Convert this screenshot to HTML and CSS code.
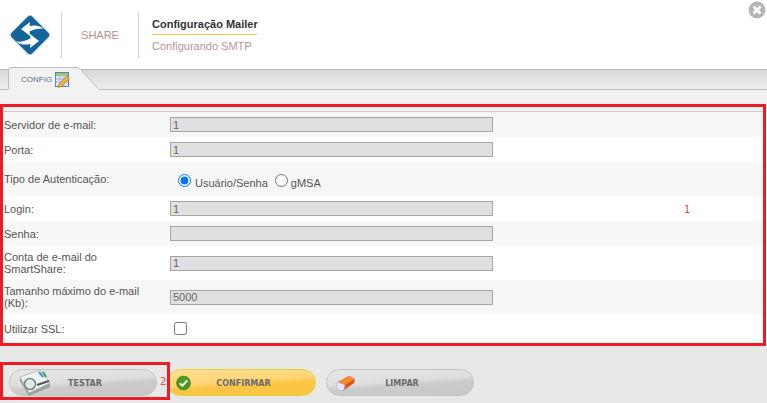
FILE: index.html
```html
<!DOCTYPE html>
<html>

  <head>
    <meta charset="UTF-8">
    <title>Configuração Mailer</title>
    <link rel="stylesheet" href="styles.css">
  </head>

  <body>
    <div class="header">
      <svg class="logo" width="44" height="44" viewBox="0 0 44 44">
        <rect x="7" y="7" width="30" height="30" rx="4" transform="rotate(45 22 22)" fill="#14649c" stroke="#d5d8da" stroke-width="1"/>
        <path d="M13 16 L22 9 L21.5 13 C26 12 31 12 36 15.5 C31 15 26 16 21.5 18.5 L22 23 Z" fill="#fff"/>
        <path d="M31 28 L22 35 L22.5 31 C18 32 13 32 8 28.5 C13 29 18 28 22.5 25.5 L22 21 Z" fill="#fff"/>
      </svg>
      <div class="sep"></div>
      <div class="brand">SHARE</div>
      <div class="sep"></div>
      <div class="titles">
        <div class="title">Configuração Mailer</div>
        <div class="subtitle">Configurando SMTP</div>
      </div>
      <svg class="close" width="18" height="18" viewBox="0 0 18 18">
        <circle cx="9" cy="9" r="8.5" fill="#b5b5b5"/>
        <path d="M5.5 5.5 L12.5 12.5 M12.5 5.5 L5.5 12.5" stroke="#fff" stroke-width="2.6"/>
      </svg>
    </div>

    <div class="tabbar">
      <div class="tab">
        <svg class="tabShape" width="92" height="23" viewBox="0 0 92 23">
          <path d="M0.5 23 L0.5 3 Q0.5 0.5 3 0.5 L69 0.5 Q71 0.5 72 2 L91 22.5 L91 23 Z" fill="#f2f2f2"/>
          <path d="M0.5 22 L0.5 3 Q0.5 0.5 3 0.5 L69 0.5 Q71 0.5 72 2 L91 22.5" fill="none" stroke="#bdbdbd"/>
        </svg>
        <span class="tabLabel">CONFIG</span>
        <svg class="tabIcon" width="15" height="17" viewBox="0 0 15 17">
          <rect x="0.5" y="1.5" width="13" height="14" fill="#dfe9f5" stroke="#5c84b8"/>
          <rect x="1" y="2" width="12" height="3" fill="#9cc67c"/>
          <path d="M1 8 H13 M1 11 H13 M5 5 V15 M9 5 V15" stroke="#9db6d6" stroke-width="1"/>
          <path d="M3 16.5 L4 13 L12 5 L14.5 7.5 L6.5 15.5 Z" fill="#f0b040" stroke="#9a6a20" stroke-width="0.6"/>
        </svg>
      </div>
    </div>

    <div class="content">
      <div class="rows">
        <div class="row">
          <label class="lbl">Servidor de e-mail:</label>
          <input class="txt" type="text" value="1" readonly>
        </div>
        <div class="row">
          <label class="lbl">Porta:</label>
          <input class="txt" type="text" value="1" readonly>
        </div>
        <div class="row tall">
          <label class="lbl">Tipo de Autenticação:</label>
          <div class="radios">
            <input class="radio first" type="radio" name="auth" checked><span class="radioText">Usuário/Senha</span>
            <input class="radio" type="radio" name="auth"><span class="radioText">gMSA</span>
          </div>
        </div>
        <div class="row">
          <label class="lbl">Login:</label>
          <input class="txt" type="text" value="1" readonly>
        </div>
        <div class="row">
          <label class="lbl">Senha:</label>
          <input class="txt" type="text" value="" readonly>
        </div>
        <div class="row tall">
          <label class="lbl">Conta de e-mail do SmartShare:</label>
          <input class="txt" type="text" value="1" readonly>
        </div>
        <div class="row tall">
          <label class="lbl">Tamanho máximo do e-mail (Kb):</label>
          <input class="txt" type="text" value="5000" readonly>
        </div>
        <div class="row last">
          <label class="lbl">Utilizar SSL:</label>
          <input class="check" type="checkbox">
        </div>
      </div>
    </div>

    <div class="footer">
      <button type="button" class="btn">
        <svg class="btnIcon" width="34" height="28" viewBox="0 0 34 28">
          <path d="M1 8 L1 12 L10 27 L31 18 L31 14 L10 24 Z" fill="#9aa1a1"/>
          <path d="M1 8 L21 1 L31 14 L10 24 Z" fill="#eef1f1" stroke="#a4abab" stroke-width="0.7"/>
          <path d="M20 3 L24 8" stroke="#3d7fc8" stroke-width="2"/>
          <path d="M24 3 L27 8" stroke="#2fa84a" stroke-width="2"/>
          <path d="M18 16 L30 12" stroke="#50585a" stroke-width="2"/>
          <circle cx="11" cy="15" r="5.5" fill="#dfe8ea" stroke="#7d8788" stroke-width="1.6"/>
        </svg>
        <span class="btnText">TESTAR</span>
      </button>
      <button type="button" class="btn ok">
        <svg class="btnIcon" width="15" height="15" viewBox="0 0 15 15">
          <circle cx="7.5" cy="7.5" r="7" fill="#4a9a1c" stroke="#3a7d14" stroke-width="0.6"/>
          <path d="M3.8 7.8 L6.4 10.4 L11.2 4.8" fill="none" stroke="#fff" stroke-width="2"/>
        </svg>
        <span class="btnText">CONFIRMAR</span>
      </button>
      <button type="button" class="btn">
        <svg class="btnIcon" width="20" height="16" viewBox="0 0 20 16">
          <path d="M3 7 L14 1 L20 4 L19 8 L9 15 L5 16 Z" fill="#e2500f"/>
          <path d="M3 7 L14 1 L20 4 L10 10 Z" fill="#f78a2e"/>
          <path d="M3 7 L10 10 L9 15 L5 16 Q-1 12 3 7 Z" fill="#e6e8fa" stroke="#9aa0c8" stroke-width="0.5"/>
        </svg>
        <span class="btnText">LIMPAR</span>
      </button>
    </div>

    <div class="mark markForm"></div>
    <div class="mark markTest"></div>
    <span class="num numForm">1</span>
    <span class="num numTest">2</span>
  </body>

</html>
```

FILE: styles.css
```css
html, body {
    margin: 0;
    padding: 0;
}
body {
    position: relative;
    width: 767px;
    height: 403px;
    overflow: hidden;
    background-color: #e8e8e8;
    font-family: "Liberation Sans", Arial, sans-serif;
    font-size: 11px;
    color: #555;
}
.header {
    position: relative;
    display: flex;
    align-items: center;
    height: 69px;
    padding-left: 8px;
    box-sizing: border-box;
    background-color: #fff;
}
.logo {
    flex: none;
    margin-right: 9px;
}
.sep {
    flex: none;
    width: 1px;
    height: 46px;
    background-color: #d4d4d4;
}
.brand {
    width: 76px;
    text-align: center;
    color: #b58f93;
}
.titles {
    margin-left: 13px;
}
.title {
    width: 105px;
    padding-bottom: 4px;
    border-bottom: 1px solid #f5c542;
    font-weight: bold;
    color: #333;
    white-space: nowrap;
}
.subtitle {
    margin-top: 5px;
    color: #b8949a;
    white-space: nowrap;
}
.close {
    position: absolute;
    top: 1px;
    right: 1px;
}
.tabbar {
    display: flex;
    height: 21px;
    box-sizing: border-box;
    padding-left: 8px;
    border-top: 1px solid #bdbdbd;
    border-bottom: 1px solid #bdbdbd;
    background: linear-gradient(#d8d8d8, #eeeeee);
}
.tab {
    position: relative;
    display: flex;
    align-items: center;
    width: 92px;
    height: 23px;
    margin-top: -3px;
    padding: 2px 0 0 13px;
    box-sizing: border-box;
}
.tabShape {
    position: absolute;
    top: 0;
    left: 0;
}
.tabLabel {
    position: relative;
    font-size: 8px;
    color: #5c6f8c;
}
.tabIcon {
    position: relative;
    margin-left: 3px;
}
.content {
    height: 256px;
    padding-top: 21px;
    box-sizing: border-box;
    background-color: #f2f2f2;
}
.rows {
    border-top: 1px solid #cccccc;
}
.row {
    display: flex;
    align-items: center;
    height: 25px;
    background-color: #f7f7f7;
}
.row:nth-child(even) {
    background-color: #fff;
}
.row.tall {
    height: 34px;
}
.row.last {
    height: 29px;
}
.lbl {
    flex: none;
    width: 166px;
    box-sizing: border-box;
    padding-left: 4px;
    padding-right: 22px;
    margin-right: 4px;
    line-height: 12px;
}
.txt {
    width: 323px;
    height: 15px;
    margin: 0;
    padding: 0 2px;
    box-sizing: border-box;
    border: 1px solid #a5a5a5;
    background-color: #e0e0e0;
    font-family: "Liberation Sans", Arial, sans-serif;
    font-size: 11px;
    color: #666;
    outline: none;
}
.radios {
    display: flex;
    align-items: center;
    padding-top: 3px;
}
.radio {
    width: 13px;
    height: 13px;
    margin: 0 3px 0 7px;
}
.radio.first {
    margin: 0 4px 0 8px;
}
.radioText {
    position: relative;
    top: 2px;
}
.check {
    width: 13px;
    height: 13px;
    margin: 0 0 0 4px;
}
.footer {
    display: flex;
    gap: 10px;
    padding: 23px 0 0 9px;
}
.btn {
    display: flex;
    align-items: center;
    position: relative;
    width: 148px;
    height: 27px;
    padding: 0;
    box-sizing: border-box;
    border: 1px solid #c4c4c4;
    border-radius: 14px;
    background: linear-gradient(176deg, #e6e6e6 0%, #dedede 45%, #cbcbcb 60%, #c9c9c9 100%);
}
.btn.ok {
    width: 149px;
    border-color: #e5d040;
    background: linear-gradient(176deg, #ffdf90 0%, #ffd676 45%, #fdc544 60%, #fdc544 100%);
}
.btnIcon {
    position: absolute;
    top: 50%;
    transform: translateY(-50%);
    left: 8px;
}
.btn:first-child .btnIcon {
    left: 9px;
}
.btnText {
    flex: 1;
    padding: 2px 0 0 4px;
    text-align: center;
    font-family: "DejaVu Sans", Verdana, sans-serif;
    font-size: 8px;
    font-weight: bold;
    color: #6a6a6a;
}
.mark {
    position: absolute;
    box-sizing: border-box;
    border: 3px solid #ed1c24;
    pointer-events: none;
}
.markForm {
    top: 104px;
    left: 0;
    width: 766px;
    height: 242px;
}
.markTest {
    top: 362px;
    left: 0;
    width: 170px;
    height: 38px;
}
.num {
    position: absolute;
    font-family: "DejaVu Sans", Verdana, sans-serif;
    font-size: 10px;
    color: #e8474f;
}
.numForm {
    top: 204px;
    left: 684px;
}
.numTest {
    top: 376px;
    left: 160px;
}
```
